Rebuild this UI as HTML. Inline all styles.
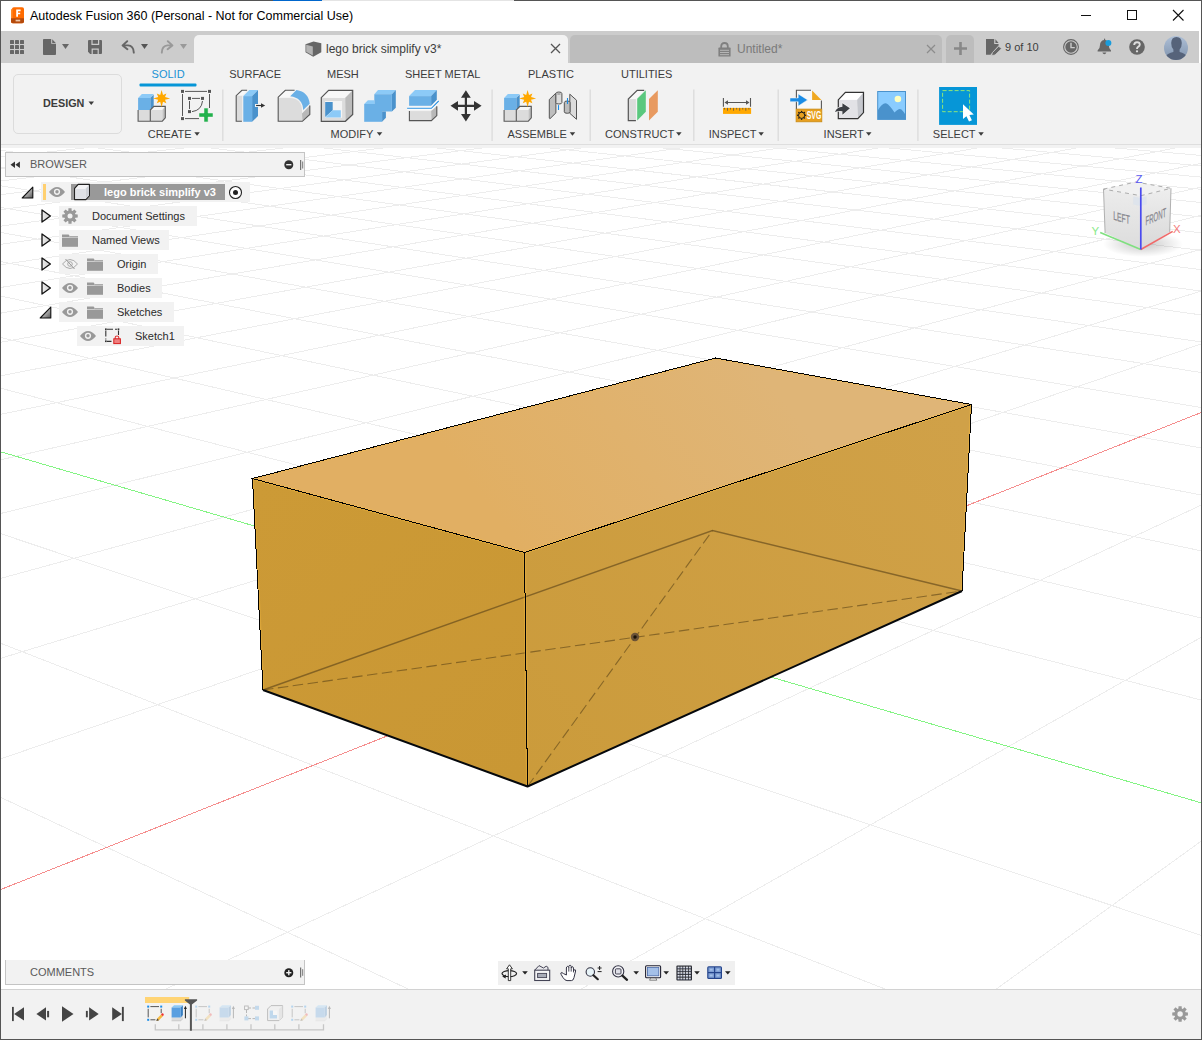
<!DOCTYPE html>
<html><head><meta charset="utf-8"><title>Autodesk Fusion 360</title>
<style>
*{box-sizing:border-box;margin:0;padding:0}
html,body{width:1202px;height:1040px;overflow:hidden;background:#fff}
body{position:relative;font-family:"Liberation Sans",sans-serif;font-size:12px;color:#3c3c3c}
.abs{position:absolute}
#frame{position:absolute;left:0;top:0;width:1202px;height:1040px;border:1px solid #555;z-index:100;pointer-events:none}
#titlebar{position:absolute;left:1px;top:1px;width:1200px;height:30px;background:#fff}
#title{position:absolute;left:29px;top:8px;font-size:12.5px;color:#000;white-space:nowrap}
#tabbar{position:absolute;left:1px;top:31px;width:1198px;height:32px;background:#ccc}
#tab1{position:absolute;left:193px;top:4px;width:374px;height:28px;background:#f2f2f2;border-radius:5px 5px 0 0}
#tab2{position:absolute;left:569px;top:4px;width:372px;height:28px;background:#bdbdbd;border-radius:5px 5px 0 0}
#tab3{position:absolute;left:945px;top:4px;width:28px;height:28px;background:#bdbdbd;border-radius:5px 5px 0 0}
.tabtxt{position:absolute;top:7px;font-size:12px;white-space:nowrap}
#toolbar{position:absolute;left:1px;top:63px;width:1200px;height:85px;background:#f2f2f2}
#tbline{position:absolute;left:0;top:81px;width:1200px;height:1px;background:#dedede}
#design{position:absolute;left:12px;top:11px;width:109px;height:60px;border:1px solid #dcdcdc;border-radius:5px}
#design span{position:absolute;left:29px;top:22px;font-weight:bold;font-size:10.8px;color:#3c3c3c}
.wtab{position:absolute;top:5px;font-size:11px;color:#3c3c3c;white-space:nowrap}
.grp{position:absolute;top:65px;font-size:11px;color:#3c3c3c;white-space:nowrap}
.sep{position:absolute;top:30px;width:1px;height:50px;background:#dcdcdc}
#viewport{position:absolute;left:1px;top:148px;width:1200px;height:841px;background:#fff;overflow:hidden}
#browserhdr{position:absolute;left:5px;top:152px;width:300px;height:25px;background:#f2f2f2;border:1px solid #c4c4c4}
#commentshdr{position:absolute;left:5px;top:960px;width:300px;height:25px;background:#f2f2f2;border:1px solid #c4c4c4;border-top:none}
.hdrtxt{position:absolute;left:24px;top:5px;font-size:11px;color:#5a5a5a}
.row{position:absolute;height:19px;background:#f2f2f2}
.rowtxt{position:absolute;font-size:11px;color:#2a2a2a;white-space:nowrap}
#navbar{position:absolute;left:498px;top:961px;width:237px;height:24px;background:#f0f0f0}
#timeline{position:absolute;left:1px;top:989px;width:1200px;height:50px;background:#f2f2f2;border-top:1px solid #d2d2d2}
</style></head>
<body>
<div id="titlebar">
  <svg class="abs" style="left:9px;top:6px" width="15" height="17" viewBox="0 0 15 17">
    <path d="M1 3.2 L2.6 0.8 Q3 0.3 3.8 0.3 H12.2 Q14 0.3 14 2 V14.5 Q14 16.3 12.2 16.3 H2.8 Q1 16.3 1 14.5 Z" fill="#ff6b00"/>
    <path d="M1 3.2 L2.6 0.8 V16.3 Q1 16.3 1 14.5 Z" fill="#ff8a2a"/>
    <path d="M1 11.2 H14 V14.5 Q14 16.3 12.2 16.3 H2.8 Q1 16.3 1 14.5 Z" fill="#b54a0c"/>
    <path d="M6.2 2.6 H10.6 V4.2 H8 V5.8 H10.2 V7.3 H8 V9.8 H6.2 Z" fill="#fff"/>
    <rect x="5.6" y="12.7" width="4.6" height="1.7" fill="#f0c8a8"/>
  </svg>
  <div id="title">Autodesk Fusion 360 (Personal - Not for Commercial Use)</div>
  <svg class="abs" style="left:1075px;top:4px" width="120" height="22" viewBox="0 0 120 22">
    <path d="M5 10.5 H15" stroke="#111" stroke-width="1" fill="none"/>
    <rect x="51.5" y="5.5" width="9" height="9" stroke="#111" stroke-width="1" fill="none"/>
    <path d="M97 5 L107.5 15.5 M107.5 5 L97 15.5" stroke="#111" stroke-width="1.1" fill="none"/>
  </svg>
</div>
<div id="tabbar">
  <!-- grid -->
  <svg class="abs" style="left:9px;top:9px" width="14" height="14" viewBox="0 0 14 14" fill="#666">
    <rect x="0" y="0" width="4" height="4" rx=".6"/><rect x="5" y="0" width="4" height="4" rx=".6"/><rect x="10" y="0" width="4" height="4" rx=".6"/>
    <rect x="0" y="5" width="4" height="4" rx=".6"/><rect x="5" y="5" width="4" height="4" rx=".6"/><rect x="10" y="5" width="4" height="4" rx=".6"/>
    <rect x="0" y="10" width="4" height="4" rx=".6"/><rect x="5" y="10" width="4" height="4" rx=".6"/><rect x="10" y="10" width="4" height="4" rx=".6"/>
  </svg>
  <!-- file -->
  <svg class="abs" style="left:42px;top:8px" width="28" height="16" viewBox="0 0 28 16">
    <path d="M0.8 0 H8.2 V4.8 H13 V15 Q13 16 12.2 16 H0.8 Q0 16 0 15 V1 Q0 0 .8 0 Z M9.2 0.3 L12.8 3.9 H9.2 Z" fill="#666"/>
    <path d="M19 5 H26 L22.5 10 Z" fill="#666"/>
  </svg>
  <!-- save -->
  <svg class="abs" style="left:87px;top:9px" width="14" height="14" viewBox="0 0 14 14">
    <path d="M1 0 H13 Q14 0 14 1 V13 Q14 14 13 14 H2.2 L0 11.8 V1 Q0 0 1 0 Z" fill="#666"/>
    <path d="M4 0 V4.4 H10.6 V0" stroke="#ccc" stroke-width="1.2" fill="none"/>
    <path d="M4.2 14 V9.2 H10.2 V14" stroke="#ccc" stroke-width="1.2" fill="none"/>
  </svg>
  <!-- undo -->
  <svg class="abs" style="left:119px;top:9px" width="30" height="14" viewBox="0 0 30 14">
    <path d="M7.2 1.2 L2.6 5.4 L7.4 9.2 M3 5.4 H8 Q13.5 5.6 13.8 12.6" stroke="#666" stroke-width="1.9" fill="none" stroke-linecap="round" stroke-linejoin="round"/>
    <path d="M21 4 H28 L24.5 9 Z" fill="#555"/>
  </svg>
  <!-- redo -->
  <svg class="abs" style="left:159px;top:9px" width="30" height="14" viewBox="0 0 30 14">
    <path d="M7.8 1.2 L12.4 5.4 L7.6 9.2 M12 5.4 H7.5 Q2 5.8 1.8 12.6" stroke="#999" stroke-width="1.9" fill="none" stroke-linecap="round" stroke-linejoin="round"/>
    <path d="M20 4 H27 L23.5 9 Z" fill="#999"/>
  </svg>
  <div id="tab1">
    <svg class="abs" style="left:111px;top:6px" width="17" height="17" viewBox="0 0 17 17">
      <path d="M0.5 3.2 L8.5 0.4 L16.3 2.2 V11.2 L8.2 15.8 L0.5 11.2 Z" fill="#666"/>
      <path d="M1.2 3.8 L7.8 5.6 V14.6 L1.2 10.8 Z" fill="#b4b4b4"/>
    </svg>
    <span class="tabtxt" style="left:132px;color:#3c3c3c">lego brick simplify v3*</span>
    <svg class="abs" style="left:356px;top:8px" width="11" height="11" viewBox="0 0 11 11"><path d="M1 1 L10 10 M10 1 L1 10" stroke="#555" stroke-width="1.3" fill="none"/></svg>
  </div>
  <div id="tab2">
    <svg class="abs" style="left:148px;top:7px" width="13" height="15" viewBox="0 0 13 15">
      <path d="M3.2 6 V4.2 Q3.2 1 6.5 1 Q9.8 1 9.8 4.2 V6" stroke="#808080" stroke-width="1.8" fill="none"/>
      <path d="M1 5.6 H12 Q12.6 5.6 12.6 6.2 V14 Q12.6 14.6 12 14.6 H1 Q0.4 14.6 .4 14 V6.2 Q.4 5.6 1 5.6 Z" fill="#808080"/>
      <path d="M2 8.3 H11 M2 10.5 H11 M2 12.7 H11" stroke="#bcbcbc" stroke-width="0.9"/>
    </svg>
    <span class="tabtxt" style="left:167px;color:#7a7a7a">Untitled*</span>
    <svg class="abs" style="left:356px;top:9px" width="10" height="10" viewBox="0 0 10 10"><path d="M1 1 L9 9 M9 1 L1 9" stroke="#8c8c8c" stroke-width="1.2" fill="none"/></svg>
  </div>
  <div id="tab3">
    <svg class="abs" style="left:8px;top:7px" width="13" height="13" viewBox="0 0 13 13"><path d="M6.5 0 V13 M0 6.5 H13" stroke="#888" stroke-width="2.6" fill="none"/></svg>
  </div>
  <!-- doc edit -->
  <svg class="abs" style="left:985px;top:8px" width="17" height="17" viewBox="0 0 17 17">
    <path d="M0 0 H8.2 V5 H12.6 V6.5 L4.5 15.8 H0 Z M9.4 0.2 L12.6 4 H9.4 Z" fill="#666"/>
    <path d="M12.6 7.2 L15.6 9.6 L9 16 L5.6 16.6 L6.4 13.6 Z" fill="#666" stroke="#ccc" stroke-width=".8"/>
  </svg>
  <span class="tabtxt" style="left:1004px;top:10px;font-size:11px;color:#3c3c3c">9 of 10</span>
  <!-- clock -->
  <svg class="abs" style="left:1061px;top:7px" width="18" height="18" viewBox="0 0 18 18">
    <circle cx="9" cy="9" r="7.4" fill="none" stroke="#666" stroke-width="1.1"/><circle cx="9" cy="9" r="5.7" fill="#666"/>
    <path d="M9 4.8 V9.6 H12.8" stroke="#ccc" stroke-width="1.4" fill="none"/>
  </svg>
  <!-- bell -->
  <svg class="abs" style="left:1095px;top:7px" width="18" height="18" viewBox="0 0 18 18">
    <path d="M8 1.2 Q8 0.6 8.6 0.6 Q9.2 .6 9.2 1.2 V2 Q12.6 2.8 12.8 7 Q12.8 11 15 12.6 V13.4 H1.6 V12.6 Q4 11 4 7 Q4.2 2.8 8 2 Z" fill="#666"/>
    <path d="M6.4 14.6 H10.4 Q9.8 16.2 8.4 16.2 Q7 16.2 6.4 14.6 Z" fill="#666"/>
    <circle cx="12.4" cy="4.9" r="3" fill="#1a9cdb"/>
  </svg>
  <!-- help -->
  <svg class="abs" style="left:1127px;top:7px" width="18" height="18" viewBox="0 0 18 18">
    <circle cx="9" cy="9" r="7.8" fill="#666"/>
    <path d="M6.2 7 Q6.2 4.2 9 4.2 Q11.8 4.2 11.8 6.6 Q11.8 8 10.2 8.8 Q9 9.5 9 11" stroke="#ddd" stroke-width="1.9" fill="none"/>
    <circle cx="9" cy="13.3" r="1.15" fill="#ddd"/>
  </svg>
  <!-- avatar -->
  <svg class="abs" style="left:1162px;top:4px" width="26" height="26" viewBox="0 0 26 26">
    <defs><linearGradient id="avg" x1="0" y1="0" x2="0" y2="1"><stop offset="0" stop-color="#aebfd6"/><stop offset="1" stop-color="#7f93ad"/></linearGradient>
    <clipPath id="avc"><circle cx="13" cy="13" r="12"/></clipPath></defs>
    <circle cx="13" cy="13" r="12" fill="url(#avg)"/>
    <g clip-path="url(#avc)" fill="#56637a">
      <path d="M13.5 2 Q18.6 2 18.8 8 Q18.8 12.5 16.6 14.6 V17 Q22 18.6 23.5 21 V26 H3 V21 Q4.5 18.6 10.4 17 V14.6 Q8.2 12.5 8.2 8 Q8.4 2 13.5 2 Z"/>
    </g>
  </svg>
</div>
<div id="toolbar">
  <div id="design"><span>DESIGN</span></div>
  <div id="tbline"></div>
<svg class="abs" style="left:0;top:0" width="1200" height="85" viewBox="1 63 1200 85"><rect x="222.10000000000002" y="89.5" width="1.4" height="51.5" fill="#dcdcdc"/><rect x="491.40000000000003" y="89.5" width="1.4" height="51.5" fill="#dcdcdc"/><rect x="589.5" y="89.5" width="1.4" height="51.5" fill="#dcdcdc"/><rect x="693.0999999999999" y="89.5" width="1.4" height="51.5" fill="#dcdcdc"/><rect x="777.5" y="89.5" width="1.4" height="51.5" fill="#dcdcdc"/><rect x="917.1999999999999" y="89.5" width="1.4" height="51.5" fill="#dcdcdc"/><rect x="139.5" y="83.6" width="57" height="2.8" rx="1" fill="#0696d7"/><g transform="translate(0,0)"><path d="M138.1 98 L141.9 94.1 H153.7 L150.3 98 Z" fill="#8ccaf7"/><path d="M150.3 98 L153.7 94.4 V106.2 L150.3 110 Z" fill="#4a92cc"/><rect x="138.1" y="98" width="12.2" height="12" fill="#6ab0e6"/><path d="M150.3 110 L153.7 106.4 H165.3 L162.3 110 Z" fill="#f6f6f6"/><path d="M162.3 110 L165.3 106.4 V117.8 L162.3 121.2 Z" fill="#c2c2c2"/><rect x="138.1" y="110" width="24.2" height="11.2" fill="#dcdcdc"/><path d="M138.1 110 V121.2 H162.3 L165.3 117.8 V106.4 H153.9 L150.3 110 V121.2" fill="none" stroke="#5a5a5a" stroke-width="1.1"/><polygon points="161.60,89.90 163.02,94.98 166.41,93.59 165.02,96.98 170.10,98.40 165.02,99.82 166.41,103.21 163.02,101.82 161.60,106.90 160.18,101.82 156.79,103.21 158.18,99.82 153.10,98.40 158.18,96.98 156.79,93.59 160.18,94.98" fill="#ffa800"/></g><g stroke="#555" stroke-width="1" fill="none"><path d="M185 91.4 H207 M182.5 94 V116 M209.5 94 V108 M185 118.6 H199"/><path d="M192 98.4 H200 M189.5 101 V109 M202.5 101 Q201.5 110.5 192 111.6"/></g><g fill="#555"><rect x="181.0" y="89.9" width="3" height="3"/><rect x="208.0" y="89.9" width="3" height="3"/><rect x="181.0" y="117.1" width="3" height="3"/><rect x="188.0" y="96.9" width="3" height="3"/><rect x="201.0" y="96.9" width="3" height="3"/><rect x="188.0" y="110.1" width="3" height="3"/></g><path d="M204 108.1 H208.1 V113 H213 V117.1 H208.1 V121.9 H204 V117.1 H199 V113 H204 Z" fill="#22b14c" stroke="#f2f2f2" stroke-width=".5"/><path d="M236.2 95.7 L241.9 90.3 H247.5 L242 95.7 Z" fill="#f8f8f8"/><rect x="236.2" y="95.7" width="6" height="25.6" fill="#dcdcdc"/><path d="M247.1 90.3 H241.9 L236.2 95.7 V121.3 H241.9" fill="none" stroke="#555" stroke-width="1.1"/><path d="M243.3 96.1 L249.3 90.1 H258 L252.1 96.1 Z" fill="#8ccaf7"/><path d="M252.1 96.1 L258 90.1 V116 L252.1 121.8 Z" fill="#4a92cc"/><rect x="243.3" y="96.1" width="8.8" height="25.7" fill="#6ab0e6"/><rect x="255" y="104" width="3.5" height="3" fill="#f2f2f2"/><path d="M256.1 105.5 H262" stroke="#333" stroke-width="1.1"/><path d="M261 103.3 L265.2 105.5 L261 107.7 Z" fill="#333"/><path d="M278.2 97.2 L285.3 90.3 H296 L289 97.2 Z" fill="#f8f8f8"/><path d="M278.6 98 H290 Q301.5 98.5 302 110 V121.3 H278.6 Z" fill="#dcdcdc"/><path d="M302 113.4 L309.8 105.4 V114.4 L302.4 121.3 Z" fill="#b8b8b8"/><path d="M290.2 96.2 L296.5 90.1 Q308.5 92 309.7 103.8 L303.2 110 Q302.6 97.6 290.2 96.2 Z" fill="#6ab0e6"/><path d="M294.6 90.3 H285.3 L278.2 97.2 V121.3 H302.4 L309.8 114.4 V105.4" fill="none" stroke="#555" stroke-width="1.1"/><path d="M321.3 97.6 L328.6 90.3 H352.7 L345.1 98 Z" fill="#f8f8f8"/><path d="M345.1 98 L352.7 90.3 V114.5 L345.4 121.3 Z" fill="#bcbcbc"/><rect x="321.3" y="98" width="23.9" height="23.3" fill="#dcdcdc"/><rect x="325.1" y="101" width="17" height="16.8" fill="#f4f4f4"/><path d="M325.2 102.1 H332.7 V110.3 L325.2 117 Z" fill="#4a92cc"/><path d="M325.2 117.4 L332.7 110.3 H340.8 V117.4 Z" fill="#8ccaf7"/><path d="M321.3 97.6 L328.6 90.3 H352.7 V114.5 L345.4 121.3 H321.3 Z" fill="none" stroke="#555" stroke-width="1.2"/><path d="M374.3 94.2 L378 90.1 H395.8 L391.9 94.2 Z" fill="#8ccaf7"/><path d="M391.9 94.2 L395.8 90.1 V107.7 L391.9 111.5 Z" fill="#4a92cc"/><rect x="374.3" y="94.2" width="17.6" height="17.3" fill="#6ab0e6"/><path d="M364.2 104 L367.9 100.2 H374.3 V104 Z" fill="#8ccaf7"/><rect x="364.2" y="104" width="17.9" height="17.8" fill="#6ab0e6"/><path d="M382.1 111.5 H385.9 V117.8 L382.1 121.8 Z" fill="#4a92cc"/><path d="M409.1 96.1 L415 90.1 H436.8 L431.1 96.1 Z" fill="#8ccaf7"/><path d="M431.1 96.1 L436.8 90.1 V99.8 L431.1 105.8 Z" fill="#4a92cc"/><rect x="409.1" y="96.1" width="22" height="9.7" fill="#6ab0e6"/><rect x="409.4" y="111.1" width="21.7" height="9.5" fill="#dcdcdc"/><path d="M431.1 111.1 L436.8 106.2 V115.6 L431.4 120.6 Z" fill="#b8b8b8"/><path d="M409.4 111.1 V120.6 H431.4 L436.8 115.6 V106.2" fill="none" stroke="#555" stroke-width="1.1"/><path d="M407.1 108.3 H431.4 L438.7 101" fill="none" stroke="#fff" stroke-width="3"/><path d="M407.1 108.3 H431.4 L438.7 101" fill="none" stroke="#2a90e0" stroke-width="1.1"/><path d="M465.9 96 V116 M456 105.8 H476" stroke="#333" stroke-width="2.2"/><path d="M465.9 90.3 L470.8 97.8 H461 Z M465.9 121.6 L470.8 114 H461 Z M450.5 105.8 L458 100.9 V110.7 Z M481.6 105.8 L474 100.9 V110.7 Z" fill="#333"/><g transform="translate(366,0)"><path d="M138.1 98 L141.9 94.1 H153.7 L150.3 98 Z" fill="#8ccaf7"/><path d="M150.3 98 L153.7 94.4 V106.2 L150.3 110 Z" fill="#4a92cc"/><rect x="138.1" y="98" width="12.2" height="12" fill="#6ab0e6"/><path d="M150.3 110 L153.7 106.4 H165.3 L162.3 110 Z" fill="#f6f6f6"/><path d="M162.3 110 L165.3 106.4 V117.8 L162.3 121.2 Z" fill="#c2c2c2"/><rect x="138.1" y="110" width="24.2" height="11.2" fill="#dcdcdc"/><path d="M138.1 110 V121.2 H162.3 L165.3 117.8 V106.4 H153.9 L150.3 110 V121.2" fill="none" stroke="#5a5a5a" stroke-width="1.1"/><polygon points="161.60,89.90 163.02,94.98 166.41,93.59 165.02,96.98 170.10,98.40 165.02,99.82 166.41,103.21 163.02,101.82 161.60,106.90 160.18,101.82 156.79,103.21 158.18,99.82 153.10,98.40 158.18,96.98 156.79,93.59 160.18,94.98" fill="#ffa800"/></g><path d="M549.3 99.5 L555.9 93.1 V112.9 L549.9 118.8 L549.3 118.2 Z" fill="#bdbdbd" stroke="#555" stroke-width="1"/><path d="M555.9 93.6 Q555.9 92 558.9 92 Q561.9 92 561.9 93.6 V102.6 Q561.9 104 558.9 104 Q555.9 104 555.9 102.6 Z" fill="#dcdcdc" stroke="#555" stroke-width="1"/><ellipse cx="558.9" cy="94" rx="2" ry=".9" fill="#aaa"/><path d="M558.5 105.1 V110" stroke="#1a8ce6" stroke-width="1.1"/><path d="M569.8 94.2 L576.5 100.2 V119.3 L569.8 113.3 Z" fill="#dcdcdc" stroke="#555" stroke-width="1"/><path d="M564.3 102.6 Q564.3 101 567.2 101 Q570.1 101 570.1 102.6 V111.8 Q570.1 113.3 567.2 113.3 Q564.3 113.3 564.3 111.8 Z" fill="#bdbdbd" stroke="#555" stroke-width="1"/><path d="M567.5 98 V104" stroke="#1a8ce6" stroke-width="1.1"/><path d="M628.3 99.1 L637.2 90.3 H644.2 L636 99.1 Z" fill="#f8f8f8"/><rect x="628.3" y="99.1" width="7.6" height="21.5" fill="#dcdcdc"/><path d="M644.2 90.3 H637.2 L628.3 99.1 V120.6 H635.9" fill="none" stroke="#555" stroke-width="1.2"/><path d="M637.2 98.7 L645.8 90.3 V111.8 L637.2 120.6 Z" fill="#5ac87e"/><path d="M649 99.1 L657.8 90.3 V111.8 L649 120.6 Z" fill="#e89a60"/><path d="M723.4 98 V106.8 M750.5 98 V106.8 M725.5 102.5 H748.5" stroke="#555" stroke-width="1.1"/><path d="M724.4 102.5 L728 100.2 V104.8 Z M749.5 102.5 L746 100.2 V104.8 Z" fill="#555"/><rect x="723" y="107.9" width="28.1" height="6" fill="#ffa800"/><rect x="724.10" y="107.9" width=".8" height="1.6" fill="#555"/><rect x="727.15" y="107.9" width=".8" height="2.8" fill="#555"/><rect x="730.20" y="107.9" width=".8" height="1.6" fill="#555"/><rect x="733.25" y="107.9" width=".8" height="2.8" fill="#555"/><rect x="736.30" y="107.9" width=".8" height="1.6" fill="#555"/><rect x="739.35" y="107.9" width=".8" height="2.8" fill="#555"/><rect x="742.40" y="107.9" width=".8" height="1.6" fill="#555"/><rect x="745.45" y="107.9" width=".8" height="2.8" fill="#555"/><rect x="748.50" y="107.9" width=".8" height="1.6" fill="#555"/><path d="M796.4 90.3 H812 V100 H821.4 V110 H796.4 Z" fill="#f8f8f8"/><path d="M811 90.3 H796.4 V109 M821.4 100.5 V109" fill="none" stroke="#555" stroke-width="1.1"/><path d="M812.1 90.5 L821.4 99.9 H812.1 Z" fill="#f0a820"/><rect x="796.1" y="109.1" width="25.7" height="12.7" fill="#e8a020" stroke="#c88a14" stroke-width=".8"/><circle cx="801.6" cy="115.3" r="3.1" fill="none" stroke="#1a1a1a" stroke-width="1"/><circle cx="805.50" cy="115.30" r=".75" fill="#1a1a1a"/><circle cx="804.36" cy="118.06" r=".75" fill="#1a1a1a"/><circle cx="801.60" cy="119.20" r=".75" fill="#1a1a1a"/><circle cx="798.84" cy="118.06" r=".75" fill="#1a1a1a"/><circle cx="797.70" cy="115.30" r=".75" fill="#1a1a1a"/><circle cx="798.84" cy="112.54" r=".75" fill="#1a1a1a"/><circle cx="801.60" cy="111.40" r=".75" fill="#1a1a1a"/><circle cx="804.36" cy="112.54" r=".75" fill="#1a1a1a"/><text transform="translate(806.8,119.2) scale(0.6,1)" font-family="Liberation Sans, sans-serif" font-weight="bold" font-size="11.4" fill="#fff">SVG</text><path d="M790 98 H798.2 V93.9 L807.6 99.9 L798.2 106.1 V101.7 H790 Z" fill="#1a8ce6" stroke="#f2f2f2" stroke-width=".5"/><path d="M838.3 99.9 L845.4 92.4 H863.5 L857 99.9 Z" fill="#fff"/><path d="M857 99.9 L863.5 92.4 V112.6 L857.8 118.6 Z" fill="#c6c8ce"/><rect x="838.3" y="99.9" width="18.9" height="18.7" fill="#e2e2e6"/><path d="M838.3 99.9 L845.4 92.4 H863.5 V112.6 L857.8 118.6 H838.3 Z" fill="none" stroke="#333" stroke-width="1.2"/><path d="M842.4 103.2 L849.9 108.3 L842.4 114.8 V111.2 Q838 110.6 834.9 112 Q837 107.2 842.4 106.8 Z" fill="#3c3f44" stroke="#f4f4f4" stroke-width="1.2" paint-order="stroke"/><rect x="877.7" y="91.5" width="27.8" height="27.9" fill="#8accff" stroke="#4a92cc" stroke-width="1"/><path d="M878 110 Q883 102 886.5 103.6 Q889.5 105 894.5 112.6 Q899 107.6 901.4 109.6 Q903.5 111.6 905 114 V119 H878 Z" fill="#4a92cc"/><circle cx="897.9" cy="99" r="3.3" fill="#ffffc0"/><rect x="939.1" y="87" width="37.9" height="37.9" fill="#0696d7"/><rect x="942.6" y="90.6" width="27" height="21.1" fill="none" stroke="#8ee67a" stroke-width="1" stroke-dasharray="4 2"/><path d="M963 104.2 V118.9 L966.4 116.2 L969 121.6 L971.9 120.3 L969.4 115 L973.8 114.5 Z" fill="#fff"/><path d="M88.5 101.5 H94 L91.25 105 Z" fill="#3c3c3c"/><path d="M194.3 132.2 H199.8 L197.05 135.7 Z" fill="#3c3c3c"/><path d="M376.8 132.2 H382.3 L379.55 135.7 Z" fill="#3c3c3c"/><path d="M569.7 132.2 H575.2 L572.45 135.7 Z" fill="#3c3c3c"/><path d="M676.1 132.2 H681.6 L678.85 135.7 Z" fill="#3c3c3c"/><path d="M758.4 132.2 H763.9 L761.15 135.7 Z" fill="#3c3c3c"/><path d="M866 132.2 H871.5 L868.75 135.7 Z" fill="#3c3c3c"/><path d="M978.3 132.2 H983.8 L981.05 135.7 Z" fill="#3c3c3c"/></svg>
<span class="wtab" style="left:150.6px;color:#1b93d4">SOLID</span><span class="wtab" style="left:228.2px;color:#3c3c3c">SURFACE</span><span class="wtab" style="left:326px;color:#3c3c3c">MESH</span><span class="wtab" style="left:404px;color:#3c3c3c">SHEET METAL</span><span class="wtab" style="left:527px;color:#3c3c3c">PLASTIC</span><span class="wtab" style="left:620px;color:#3c3c3c">UTILITIES</span><span class="grp" style="left:146.7px">CREATE</span><span class="grp" style="left:329.6px">MODIFY</span><span class="grp" style="left:506.5px">ASSEMBLE</span><span class="grp" style="left:604.1px">CONSTRUCT</span><span class="grp" style="left:707.7px">INSPECT</span><span class="grp" style="left:822.6px">INSERT</span><span class="grp" style="left:931.8px">SELECT</span>
</div>
<div id="viewport">
<svg class="abs" style="left:0;top:0" width="1200" height="841" viewBox="1 148 1200 841">
<path d="M408.1 989.0L1.0 797.5M996.3 989.0L1201.0 841.3M885.0 989.0L1.0 643.4M581.2 989.0L1201.0 637.4M1201.0 935.3L1.0 533.8M165.9 989.0L1201.0 505.2M1201.0 700.0L1.0 388.3M1.0 758.8L1201.0 344.0M1201.0 617.9L1.0 337.6M1.0 658.2L1201.0 291.2M1201.0 550.8L1.0 296.1M1.0 578.3L1201.0 249.4M1201.0 495.0L1.0 261.6M1.0 513.4L1201.0 215.3M1201.0 447.9L1.0 232.5M1.0 459.7L1201.0 187.1M1201.0 407.5L1.0 207.5M1.0 414.3L1201.0 163.3M1201.0 372.5L1.0 185.9M1.0 375.7L1175.4 148.0M1201.0 341.9L1.0 167.0M1.0 342.2L1076.4 148.0M1201.0 314.9L1.0 150.3M1.0 313.1L977.4 148.0M1201.0 291.0L97.6 148.0M1.0 287.4L878.4 148.0M1201.0 269.6L210.9 148.0M1.0 264.7L779.3 148.0M1201.0 250.3L324.1 148.0M1.0 244.3L680.2 148.0M1201.0 232.8L437.2 148.0M1.0 226.1L581.0 148.0M1201.0 217.0L550.3 148.0M1.0 209.6L481.8 148.0M1201.0 202.5L663.4 148.0M1.0 194.6L382.6 148.0M1201.0 189.3L776.4 148.0M1.0 180.9L283.3 148.0M1201.0 177.1L889.3 148.0M1.0 168.4L183.9 148.0M1201.0 165.9L1002.2 148.0M1.0 157.0L84.6 148.0M1201.0 155.4L1115.0 148.0" stroke="#ededed" stroke-width="1" fill="none" shape-rendering="crispEdges"/>
<path d="M1.0 889.4L1201.0 412.6" stroke="#f58e8e" stroke-width="1" fill="none" shape-rendering="crispEdges"/>
<path d="M1201.0 802.8L1.0 451.9" stroke="#84f484" stroke-width="1" fill="none" shape-rendering="crispEdges"/>
<defs><linearGradient id="gtop" gradientUnits="userSpaceOnUse" x1="524" y1="552" x2="760" y2="370"><stop offset="0" stop-color="#e1af63"/><stop offset="1" stop-color="#dfb577"/></linearGradient><linearGradient id="gleft" gradientUnits="userSpaceOnUse" x1="260" y1="480" x2="520" y2="780"><stop offset="0" stop-color="#cc9a36"/><stop offset="1" stop-color="#c99734"/></linearGradient><linearGradient id="gright" gradientUnits="userSpaceOnUse" x1="530" y1="780" x2="960" y2="420"><stop offset="0" stop-color="#cb9b3b"/><stop offset="1" stop-color="#d0a148"/></linearGradient></defs>
<polygon points="252.5,478.5 524.5,552.5 971.5,404.5 715.5,358" fill="url(#gtop)"/>
<polygon points="252.5,478.5 524.5,552.5 527.5,786.5 263,690" fill="url(#gleft)"/>
<polygon points="524.5,552.5 971.5,404.5 962,591 527.5,786.5" fill="url(#gright)"/>
<path d="M263 690L712.5 530.5L962 591" stroke="#5a4218" stroke-opacity=".62" stroke-width="1.4" fill="none"/>
<path d="M263 690L962 591M527.5 786.5L712.5 530.5" stroke="#5a4218" stroke-opacity=".6" stroke-width="1.1" stroke-dasharray="10.5 4.5" fill="none"/>
<circle cx="635" cy="637" r="4.2" fill="#5b4636" fill-opacity=".85"/><circle cx="635" cy="637" r="1.7" fill="#1a1208"/>
<clipPath id="boxclip"><polygon points="252.5,478.5 715.5,358 971.5,404.5 962,591 527.5,786.5 263,690"/></clipPath><path clip-path="url(#boxclip)" d="M252.5 478.5L715.5 358L971.5 404.5L524.5 552.5Z M524.5 552.5L527.5 786.5 M252.5 478.5L263 690 M971.5 404.5L962 591" stroke="#ffc040" stroke-opacity=".32" stroke-width="3" fill="none"/>
<path d="M252.5 478.5L715.5 358L971.5 404.5L524.5 552.5Z M524.5 552.5L527.5 786.5 M252.5 478.5L263 690 M971.5 404.5L962 591" stroke="#000" stroke-width="1" fill="none" shape-rendering="crispEdges"/>
<path d="M263 690L527.5 786.5L962 591" stroke="#05080c" stroke-width="2" fill="none" stroke-linejoin="round"/>
<defs><radialGradient id="vcsh"><stop offset="0" stop-color="#000" stop-opacity=".22"/><stop offset="1" stop-color="#000" stop-opacity="0"/></radialGradient>
<linearGradient id="vcl" x1="0" y1="0" x2="0" y2="1"><stop offset="0" stop-color="#ececec"/><stop offset="1" stop-color="#dcdcdc"/></linearGradient>
<linearGradient id="vcr" x1="0" y1="0" x2="0" y2="1"><stop offset="0" stop-color="#eeeeee"/><stop offset="1" stop-color="#d8d8d8"/></linearGradient></defs>
<ellipse cx="1143" cy="244" rx="40" ry="13" fill="url(#vcsh)"/>
<polygon points="1103.5,189.1 1135.9,182 1171,188.3 1140.8,195.7" fill="#f1f1f1"/>
<polygon points="1103.5,189.1 1140.8,195.7 1140.8,249.5 1105.1,233" fill="url(#vcl)"/>
<polygon points="1140.8,195.7 1171,188.3 1169.7,231.9 1140.8,249.5" fill="url(#vcr)"/>
<path id="vchover" d="M1133.3 196.6 L1140.8 197.9 L1146.6 196.4 V204.2 L1140.8 205.9 L1133.3 204.4 Z" fill="#dbe2ec" fill-opacity=".8"/><path d="M1103.5 189.1L1135.9 182L1171 188.3L1140.8 195.7Z" fill="none" stroke="#a4a4a4" stroke-width=".9" stroke-dasharray="4 4"/>
<path d="M1103.5 189.1L1105.1 233M1171 188.3L1169.7 231.9" fill="none" stroke="#a8a8a8" stroke-width=".9"/>
<path d="M1140.8 249.5L1100.2 232.5" stroke="#7fe07f" stroke-width="1.6"/>
<path d="M1140.8 249.5L1172.7 231.4" stroke="#f06a6a" stroke-width="1.6"/>
<path d="M1140.8 187.5V249.5" stroke="#4a4af0" stroke-width="1.7"/>
<text transform="matrix(1,0.28,0,1,1113.2,219.6)" font-family="Liberation Sans, sans-serif" font-size="12" fill="#85858c" stroke="#85858c" stroke-width=".25" textLength="16.6" lengthAdjust="spacingAndGlyphs">LEFT</text>
<text transform="matrix(1,-0.45,0,1,1145.6,225.6)" font-family="Liberation Sans, sans-serif" font-size="12.5" fill="#85858c" stroke="#85858c" stroke-width=".25" textLength="20.5" lengthAdjust="spacingAndGlyphs">FRONT</text>
<text x="1135.6" y="183.4" font-family="Liberation Sans, sans-serif" font-size="11.5" fill="#5a5af2">Z</text>
<text x="1091.6" y="235.2" font-family="Liberation Sans, sans-serif" font-size="11.5" fill="#8aea8a">Y</text>
<text x="1173" y="233" font-family="Liberation Sans, sans-serif" font-size="11.5" fill="#f47a7a">X</text>
<!--VIEWCUBE_END-->
</svg>
</div>
<div id="browserhdr"><span class="hdrtxt">BROWSER</span><svg class="abs" style="left:4px;top:8px" width="12" height="8" viewBox="0 0 12 8"><path d="M0.5 3.8 L5 0.6 V7 Z M5.4 3.8 L9.9 0.6 V7 Z" fill="#333"/></svg><svg class="abs" style="left:277px;top:6px" width="22" height="12" viewBox="0 0 22 12"><circle cx="5.8" cy="5.7" r="4.5" fill="#333"/><rect x="3.2" y="5" width="5.2" height="1.4" fill="#f2f2f2"/><path d="M17.7 1 V11" stroke="#555" stroke-width="1"/><path d="M19.7 2.5 V9.5" stroke="#777" stroke-width="1"/></svg></div>
<div id="tree"><div class="row" style="left:41px;top:182px;width:209px;height:20px"></div><svg class="abs" style="left:21px;top:186px" width="13" height="13" viewBox="0 0 13 13"><defs><linearGradient id="tg2" x1="0" y1="0" x2="1" y2="1"><stop offset="0.3" stop-color="#d8d8d8"/><stop offset="1" stop-color="#555"/></linearGradient></defs><path d="M1.2 12 L11.8 1.2 V12 Z" fill="url(#tg2)" stroke="#111" stroke-width="1.1" stroke-linejoin="round"/></svg><div class="abs" style="left:43px;top:184px;width:3px;height:16px;background:#ffd070"></div><svg class="abs" style="left:49px;top:187px" width="16" height="10" viewBox="0 0 16 10"><path d="M0 5 Q4 0 8 0 Q12 0 16 5 Q12 10 8 10 Q4 10 0 5 Z" fill="#999"/><circle cx="8" cy="4.8" r="3.1" fill="#f2f2f2"/><circle cx="8" cy="4.8" r="1.7" fill="#999"/></svg><div class="abs" style="left:71px;top:184px;width:154px;height:16px;background:#999"></div><svg class="abs" style="left:73px;top:183px" width="18" height="18" viewBox="0 0 18 18"><path d="M1.6 5.4 L5.2 1.4 H16.4 V12.6 L12.8 16.6 H1.6 Z" fill="#f4f4f6" stroke="#222" stroke-width="1.2" stroke-linejoin="round"/><rect x="2.4" y="6" width="10" height="10" fill="#dfe1e6"/><path d="M12.6 5.8 L16 2 V12.4 L12.6 16 Z" fill="#cfd2d8"/></svg><span class="rowtxt" style="left:104px;top:186px;font-weight:bold;color:#fff;font-size:11px">lego brick simplify v3</span><svg class="abs" style="left:228px;top:185px" width="15" height="15" viewBox="0 0 15 15"><circle cx="7.5" cy="7.5" r="6" fill="#fff" stroke="#222" stroke-width="1.1"/><circle cx="7.5" cy="7.5" r="2.5" fill="#222"/></svg><div class="row" style="left:59px;top:206px;width:138px;height:20px"></div><svg class="abs" style="left:40.5px;top:209px" width="11" height="14" viewBox="0 0 11 14"><defs><linearGradient id="tg" x1="0" x2="1"><stop offset="0" stop-color="#eee"/><stop offset="1" stop-color="#ccc"/></linearGradient></defs><path d="M1 1 L9.4 7 L1 13 Z" fill="url(#tg)" stroke="#111" stroke-width="1.3" stroke-linejoin="round"/></svg><svg class="abs" style="left:62px;top:208px" width="16" height="16" viewBox="0 0 16 16"><polygon points="15.74,6.43 15.74,9.57 13.35,9.65 12.95,10.61 14.58,12.36 12.36,14.58 10.61,12.95 9.65,13.35 9.57,15.74 6.43,15.74 6.35,13.35 5.39,12.95 3.64,14.58 1.42,12.36 3.05,10.61 2.65,9.65 0.26,9.57 0.26,6.43 2.65,6.35 3.05,5.39 1.42,3.64 3.64,1.42 5.39,3.05 6.35,2.65 6.43,0.26 9.57,0.26 9.65,2.65 10.61,3.05 12.36,1.42 14.58,3.64 12.95,5.39 13.35,6.35" fill="#999"/><circle cx="8" cy="8" r="2.5" fill="#f2f2f2"/></svg><span class="rowtxt" style="left:92px;top:210px">Document Settings</span><div class="row" style="left:59px;top:230px;width:110px;height:20px"></div><svg class="abs" style="left:40.5px;top:233px" width="11" height="14" viewBox="0 0 11 14"><defs><linearGradient id="tg" x1="0" x2="1"><stop offset="0" stop-color="#eee"/><stop offset="1" stop-color="#ccc"/></linearGradient></defs><path d="M1 1 L9.4 7 L1 13 Z" fill="url(#tg)" stroke="#111" stroke-width="1.3" stroke-linejoin="round"/></svg><svg class="abs" style="left:62px;top:234px" width="16" height="13" viewBox="0 0 16 13"><path d="M0 0.6 H6.6 L7.6 2 H7.6 V2.9 H0 Z" fill="#999"/><rect x="0" y="3.6" width="16" height="9.2" fill="#999"/><rect x="7.6" y="2.2" width="8.4" height="1" fill="#999"/></svg><span class="rowtxt" style="left:92px;top:234px">Named Views</span><div class="row" style="left:59px;top:254px;width:99px;height:20px"></div><svg class="abs" style="left:40.5px;top:257px" width="11" height="14" viewBox="0 0 11 14"><defs><linearGradient id="tg" x1="0" x2="1"><stop offset="0" stop-color="#eee"/><stop offset="1" stop-color="#ccc"/></linearGradient></defs><path d="M1 1 L9.4 7 L1 13 Z" fill="url(#tg)" stroke="#111" stroke-width="1.3" stroke-linejoin="round"/></svg><svg class="abs" style="left:62px;top:258px" width="16" height="12" viewBox="0 0 16 12"><path d="M0.5 6 Q4 1.5 8 1.5 Q12 1.5 15.5 6 Q12 10.5 8 10.5 Q4 10.5 .5 6 Z" fill="none" stroke="#aaa" stroke-width="1"/><circle cx="8" cy="6" r="2.3" fill="none" stroke="#aaa" stroke-width="1"/><path d="M3.5 1 L12.5 11" stroke="#999" stroke-width="1"/></svg><svg class="abs" style="left:87px;top:258px" width="16" height="13" viewBox="0 0 16 13"><path d="M0 0.6 H6.6 L7.6 2 H7.6 V2.9 H0 Z" fill="#999"/><rect x="0" y="3.6" width="16" height="9.2" fill="#999"/><rect x="7.6" y="2.2" width="8.4" height="1" fill="#999"/></svg><span class="rowtxt" style="left:117px;top:258px">Origin</span><div class="row" style="left:59px;top:278px;width:103px;height:20px"></div><svg class="abs" style="left:40.5px;top:281px" width="11" height="14" viewBox="0 0 11 14"><defs><linearGradient id="tg" x1="0" x2="1"><stop offset="0" stop-color="#eee"/><stop offset="1" stop-color="#ccc"/></linearGradient></defs><path d="M1 1 L9.4 7 L1 13 Z" fill="url(#tg)" stroke="#111" stroke-width="1.3" stroke-linejoin="round"/></svg><svg class="abs" style="left:62px;top:283px" width="16" height="10" viewBox="0 0 16 10"><path d="M0 5 Q4 0 8 0 Q12 0 16 5 Q12 10 8 10 Q4 10 0 5 Z" fill="#999"/><circle cx="8" cy="4.8" r="3.1" fill="#f2f2f2"/><circle cx="8" cy="4.8" r="1.7" fill="#999"/></svg><svg class="abs" style="left:87px;top:282px" width="16" height="13" viewBox="0 0 16 13"><path d="M0 0.6 H6.6 L7.6 2 H7.6 V2.9 H0 Z" fill="#999"/><rect x="0" y="3.6" width="16" height="9.2" fill="#999"/><rect x="7.6" y="2.2" width="8.4" height="1" fill="#999"/></svg><span class="rowtxt" style="left:117px;top:282px">Bodies</span><div class="row" style="left:59px;top:302px;width:115px;height:20px"></div><svg class="abs" style="left:39px;top:306px" width="13" height="13" viewBox="0 0 13 13"><defs><linearGradient id="tg2" x1="0" y1="0" x2="1" y2="1"><stop offset="0.3" stop-color="#d8d8d8"/><stop offset="1" stop-color="#555"/></linearGradient></defs><path d="M1.2 12 L11.8 1.2 V12 Z" fill="url(#tg2)" stroke="#111" stroke-width="1.1" stroke-linejoin="round"/></svg><svg class="abs" style="left:62px;top:307px" width="16" height="10" viewBox="0 0 16 10"><path d="M0 5 Q4 0 8 0 Q12 0 16 5 Q12 10 8 10 Q4 10 0 5 Z" fill="#999"/><circle cx="8" cy="4.8" r="3.1" fill="#f2f2f2"/><circle cx="8" cy="4.8" r="1.7" fill="#999"/></svg><svg class="abs" style="left:87px;top:306px" width="16" height="13" viewBox="0 0 16 13"><path d="M0 0.6 H6.6 L7.6 2 H7.6 V2.9 H0 Z" fill="#999"/><rect x="0" y="3.6" width="16" height="9.2" fill="#999"/><rect x="7.6" y="2.2" width="8.4" height="1" fill="#999"/></svg><span class="rowtxt" style="left:117px;top:306px">Sketches</span><div class="row" style="left:77px;top:326px;width:107px;height:20px"></div><svg class="abs" style="left:80px;top:331px" width="16" height="10" viewBox="0 0 16 10"><path d="M0 5 Q4 0 8 0 Q12 0 16 5 Q12 10 8 10 Q4 10 0 5 Z" fill="#999"/><circle cx="8" cy="4.8" r="3.1" fill="#f2f2f2"/><circle cx="8" cy="4.8" r="1.7" fill="#999"/></svg><svg class="abs" style="left:104px;top:327px" width="18" height="18" viewBox="0 0 18 18"><path d="M3 2.2 H13 M1.8 3.6 V12.4 M3 14.4 H7.5 M14.5 3.6 V8" stroke="#333" stroke-width="1.1" fill="none" stroke-dasharray="6 2"/><g fill="#333"><rect x="1" y="1.4" width="1.7" height="1.7"/><rect x="13.6" y="1.4" width="1.7" height="1.7"/><rect x="1" y="13.4" width="1.7" height="1.7"/></g><path d="M11.2 12 V10.6 Q11.2 9 13 9 Q14.8 9 14.8 10.6 V12" stroke="#e03030" stroke-width="1.1" fill="none"/><rect x="9.8" y="11.8" width="6.6" height="4.8" fill="#f08080" stroke="#d82020" stroke-width="1"/></svg><span class="rowtxt" style="left:135px;top:330px">Sketch1</span></div>
<div id="commentshdr"><span class="hdrtxt" style="top:6px">COMMENTS</span><svg class="abs" style="left:277px;top:7px" width="22" height="12" viewBox="0 0 22 12"><circle cx="5.8" cy="5.7" r="4.5" fill="#222"/><rect x="3.2" y="5" width="5.2" height="1.4" fill="#f2f2f2"/><rect x="5.1" y="3.1" width="1.4" height="5.2" fill="#f2f2f2"/><path d="M17.7 0.5 V10.5" stroke="#555" stroke-width="1"/><path d="M19.7 2.2 V8.8" stroke="#777" stroke-width="1"/></svg></div>
<div id="navbar"><svg class="abs" style="left:0;top:0" width="237" height="24" viewBox="498 961 237 24"><ellipse cx="509.3" cy="973.6" rx="7.3" ry="3" fill="none" stroke="#222" stroke-width="1.2"/><path d="M508.3 980.6 V968.8 H506.6 L509.5 964.8 L512.4 968.8 H510.7 V980.6 Z" fill="#fff" stroke="#222" stroke-width=".9"/><path d="M502.2 976.6 L506 974.4 L505.6 978.4 Z" fill="#222"/><path d="M522.2 971.2 H527.8000000000001 L525.0 974.6 Z" fill="#222"/><path d="M534.7 970.2 L539 965.6 L543.5 968 L546.2 966.2 L548 967.4 V970.2" fill="#e8e8ec" stroke="#445" stroke-width="1"/><rect x="534.7" y="970.2" width="15" height="10.3" fill="#f4f4f6" stroke="#445" stroke-width="1.1"/><rect x="537.6" y="973.4" width="9" height="4.2" fill="#a8acb8" stroke="#445" stroke-width=".9"/><path d="M563.5 973.6 Q561.5 971.8 560.8 973 Q560.6 974 563 977.6 Q565 980.6 567 980.6 H571.4 Q573.4 980.6 574 977.6 L575.6 971 Q575.8 969.6 574.8 969.6 Q574 969.6 573.6 971 L573.4 968 Q573.2 966.6 572.2 966.6 Q571.4 966.8 571.2 968 V966.6 Q571 965.2 570 965.2 Q569 965.4 568.8 966.6 V967.6 Q568.4 966.2 567.4 966.4 Q566.4 966.8 566.4 968 V975 Z" fill="#fff" stroke="#334" stroke-width="1"/><path d="M568.8 967.6 V971.6 M571.2 968 V971.6 M573.5 970.6 V972.4" stroke="#334" stroke-width=".9" fill="none"/><circle cx="590.3" cy="972" r="4.2" fill="#e8f4f8" stroke="#334" stroke-width="1.1"/><path d="M593.4 975.2 L597.8 979.2" stroke="#222" stroke-width="2.2" stroke-linecap="round"/><path d="M597.6 968 H601.6 M599.6 966 V970 M597.6 971.6 H601.6" stroke="#222" stroke-width="1"/><circle cx="618.2" cy="971.4" r="5.6" fill="#f4f4f8" stroke="#334" stroke-width="1.1"/><rect x="615.4" y="968.8" width="5.6" height="5.2" rx="1" fill="#e0e0e8" stroke="#334" stroke-width=".9"/><path d="M622.4 975.6 L627 979.8" stroke="#222" stroke-width="2.3" stroke-linecap="round"/><path d="M633.4 971.2 H639.0 L636.1999999999999 974.6 Z" fill="#222"/><rect x="645.6" y="965.8" width="15" height="12" rx="1" fill="#f4f4f4" stroke="#223" stroke-width="1.1"/><rect x="647.4" y="967.6" width="11.4" height="8.2" fill="#a4c0e8" stroke="#4a6aa8" stroke-width=".8"/><path d="M650.6 978 H655.8 L656.8 980.2 H649.6 Z" fill="#f0f0f0" stroke="#555" stroke-width=".7"/><path d="M663.4 971.2 H669.0 L666.1999999999999 974.6 Z" fill="#222"/><defs><linearGradient id="gdg" x1="0" y1="0" x2="0" y2="1"><stop offset="0" stop-color="#fff"/><stop offset="1" stop-color="#9098b0"/></linearGradient></defs><rect x="676.4" y="965.6" width="15.6" height="15" rx="1" fill="#2a2c34"/><rect x="677.6" y="966.70" width="2" height="1.9" fill="url(#gdg)"/><rect x="677.6" y="969.45" width="2" height="1.9" fill="url(#gdg)"/><rect x="677.6" y="972.20" width="2" height="1.9" fill="url(#gdg)"/><rect x="677.6" y="974.95" width="2" height="1.9" fill="url(#gdg)"/><rect x="677.6" y="977.70" width="2" height="1.9" fill="url(#gdg)"/><rect x="680.4" y="966.70" width="2" height="1.9" fill="url(#gdg)"/><rect x="680.4" y="969.45" width="2" height="1.9" fill="url(#gdg)"/><rect x="680.4" y="972.20" width="2" height="1.9" fill="url(#gdg)"/><rect x="680.4" y="974.95" width="2" height="1.9" fill="url(#gdg)"/><rect x="680.4" y="977.70" width="2" height="1.9" fill="url(#gdg)"/><rect x="683.2" y="966.70" width="2" height="1.9" fill="url(#gdg)"/><rect x="683.2" y="969.45" width="2" height="1.9" fill="url(#gdg)"/><rect x="683.2" y="972.20" width="2" height="1.9" fill="url(#gdg)"/><rect x="683.2" y="974.95" width="2" height="1.9" fill="url(#gdg)"/><rect x="683.2" y="977.70" width="2" height="1.9" fill="url(#gdg)"/><rect x="686.0" y="966.70" width="2" height="1.9" fill="url(#gdg)"/><rect x="686.0" y="969.45" width="2" height="1.9" fill="url(#gdg)"/><rect x="686.0" y="972.20" width="2" height="1.9" fill="url(#gdg)"/><rect x="686.0" y="974.95" width="2" height="1.9" fill="url(#gdg)"/><rect x="686.0" y="977.70" width="2" height="1.9" fill="url(#gdg)"/><rect x="688.8" y="966.70" width="2" height="1.9" fill="url(#gdg)"/><rect x="688.8" y="969.45" width="2" height="1.9" fill="url(#gdg)"/><rect x="688.8" y="972.20" width="2" height="1.9" fill="url(#gdg)"/><rect x="688.8" y="974.95" width="2" height="1.9" fill="url(#gdg)"/><rect x="688.8" y="977.70" width="2" height="1.9" fill="url(#gdg)"/><path d="M694.2 971.2 H699.8000000000001 L697.0 974.6 Z" fill="#222"/><rect x="707.2" y="966.2" width="14.8" height="12.8" rx="1.5" fill="#24448c"/><rect x="708.4" y="967.4" width="5.6" height="4.6" fill="#7e9ed4"/><rect x="709.8" y="968.8" width="2.8" height="1.8" fill="#a4c0e8"/><rect x="715.2" y="967.4" width="5.6" height="4.6" fill="#7e9ed4"/><rect x="716.6" y="968.8" width="2.8" height="1.8" fill="#a4c0e8"/><rect x="708.4" y="973.2" width="5.6" height="4.6" fill="#7e9ed4"/><rect x="709.8" y="974.6" width="2.8" height="1.8" fill="#a4c0e8"/><rect x="715.2" y="973.2" width="5.6" height="4.6" fill="#7e9ed4"/><rect x="716.6" y="974.6" width="2.8" height="1.8" fill="#a4c0e8"/><path d="M725 971.2 H730.6 L727.8 974.6 Z" fill="#222"/></svg></div>
<div id="timeline"><svg class="abs" style="left:0;top:0" width="1200" height="50" viewBox="1 990 1200 50"><g fill="#444"><rect x="12" y="1006.9" width="1.8" height="14.2"/><path d="M24 1007.3 L14.1 1014 L24 1020.6 Z"/><path d="M46 1007.3 L36.4 1014 L46 1020.6 Z"/><rect x="47.1" y="1010.9" width="2" height="6.4"/><path d="M62 1006.2 L73.5 1014 L62 1021.8 Z"/><rect x="85.9" y="1010.9" width="1.9" height="6.4"/><path d="M89.1 1007.3 L98.7 1014 L89.1 1020.6 Z"/><path d="M112.2 1007.3 L121.9 1014 L112.2 1020.6 Z"/><rect x="121.9" y="1006.9" width="1.9" height="14.2"/></g><path d="M155.3 1024.2 V1029.9 H323.5 V1024.2 M178.8 1024.2 V1029.9 M202.9 1024.2 V1029.9 M226.9 1024.2 V1029.9 M251 1024.2 V1029.9 M274.8 1024.2 V1029.9 M298.9 1024.2 V1029.9" stroke="#c6c6c6" stroke-width="1.3" fill="none"/><rect x="145" y="997" width="44.2" height="6" fill="#ffd474"/><g transform="translate(147,1005)" opacity="1.0"><path d="M3.4 1.6 H12 M1.2 3.8 V12.4 M14.2 3.8 V8.2 M3.4 14.8 H8.4" stroke="#444" stroke-width=".9" fill="none"/><g fill="#1a8ce6"><rect x="0.2" y=".6" width="2" height="2"/><rect x="13.2" y=".6" width="2" height="2"/><rect x="0.2" y="13.8" width="2" height="2"/></g><path d="M9.4 15.9 L10.2 13.4 L14 9.4 L15.9 11.2 L12 15.2 Z" fill="#f5b942"/><path d="M14 9.4 L14.8 8.6 Q15.8 8 16.5 8.8 Q17.1 9.8 16.4 10.6 L15.9 11.2 Z" fill="#f03030"/><path d="M9.4 15.9 L10.2 13.4 L12 15.2 Z" fill="#444"/></g><g transform="translate(171,1005)" opacity="1.0"><path d="M0.6 12.5 H9.8 L11.9 10 V13.6 L9.8 15.8 H0.6 Z" fill="#dcdcdc"/><path d="M0.6 15.8 H9.8 L11.9 13.6" stroke="#b8b8b8" stroke-width=".6" fill="none"/><path d="M0.6 2.5 L3.1 0.3 H11.9 L9.8 2.5 Z" fill="#8ccaf7"/><path d="M9.8 2.5 L11.9 .3 V10 L9.8 12.5 Z" fill="#3a7fc0"/><rect x=".6" y="2.5" width="9.2" height="10" fill="#5a9fe0"/><path d="M14.4 13.3 V3.4" stroke="#222" stroke-width="1"/><path d="M14.4 0.8 L15.9 4 H12.9 Z" fill="#222"/></g><g transform="translate(195,1005)" opacity="0.28"><path d="M3.4 1.6 H12 M1.2 3.8 V12.4 M14.2 3.8 V8.2 M3.4 14.8 H8.4" stroke="#444" stroke-width=".9" fill="none"/><g fill="#1a8ce6"><rect x="0.2" y=".6" width="2" height="2"/><rect x="13.2" y=".6" width="2" height="2"/><rect x="0.2" y="13.8" width="2" height="2"/></g><path d="M9.4 15.9 L10.2 13.4 L14 9.4 L15.9 11.2 L12 15.2 Z" fill="#f5b942"/><path d="M14 9.4 L14.8 8.6 Q15.8 8 16.5 8.8 Q17.1 9.8 16.4 10.6 L15.9 11.2 Z" fill="#f03030"/><path d="M9.4 15.9 L10.2 13.4 L12 15.2 Z" fill="#444"/></g><g transform="translate(219,1005)" opacity="0.28"><path d="M0.6 12.5 H9.8 L11.9 10 V13.6 L9.8 15.8 H0.6 Z" fill="#dcdcdc"/><path d="M0.6 15.8 H9.8 L11.9 13.6" stroke="#b8b8b8" stroke-width=".6" fill="none"/><path d="M0.6 2.5 L3.1 0.3 H11.9 L9.8 2.5 Z" fill="#8ccaf7"/><path d="M9.8 2.5 L11.9 .3 V10 L9.8 12.5 Z" fill="#3a7fc0"/><rect x=".6" y="2.5" width="9.2" height="10" fill="#5a9fe0"/><path d="M14.4 13.3 V3.4" stroke="#222" stroke-width="1"/><path d="M14.4 0.8 L15.9 4 H12.9 Z" fill="#222"/></g><g opacity=".3" transform="translate(244,1005)"><path d="M4 3 H11 M2.5 5 V11.5 M4 13.6 H11" stroke="#333" stroke-width="1" stroke-dasharray="3 1.5" fill="none"/><rect x=".6" y="1" width="3.6" height="3.6" fill="#fff" stroke="#333" stroke-width=".9"/><g fill="#5aa2e0"><rect x="11" y=".8" width="4" height="4"/><rect x=".4" y="11.4" width="4" height="4"/><rect x="11" y="11.4" width="4" height="4"/></g></g><g opacity=".32" transform="translate(267,1005)"><path d="M.6 4 L4 .6 H15.6 V12 L12 15.6 H.6 Z" fill="#eee" stroke="#555" stroke-width="1"/><path d="M12 4 L15.4 .8 V12 L12 15.4 Z" fill="#ccc"/><rect x="2.4" y="5.4" width="8" height="8.2" fill="#fff"/><path d="M2.6 5.6 H6 V10 H10 V13.4 H2.6 Z" fill="#5aa2e0"/></g><g transform="translate(291,1005)" opacity="0.28"><path d="M3.4 1.6 H12 M1.2 3.8 V12.4 M14.2 3.8 V8.2 M3.4 14.8 H8.4" stroke="#444" stroke-width=".9" fill="none"/><g fill="#1a8ce6"><rect x="0.2" y=".6" width="2" height="2"/><rect x="13.2" y=".6" width="2" height="2"/><rect x="0.2" y="13.8" width="2" height="2"/></g><path d="M9.4 15.9 L10.2 13.4 L14 9.4 L15.9 11.2 L12 15.2 Z" fill="#f5b942"/><path d="M14 9.4 L14.8 8.6 Q15.8 8 16.5 8.8 Q17.1 9.8 16.4 10.6 L15.9 11.2 Z" fill="#f03030"/><path d="M9.4 15.9 L10.2 13.4 L12 15.2 Z" fill="#444"/></g><g transform="translate(315,1005)" opacity="0.28"><path d="M0.6 12.5 H9.8 L11.9 10 V13.6 L9.8 15.8 H0.6 Z" fill="#dcdcdc"/><path d="M0.6 15.8 H9.8 L11.9 13.6" stroke="#b8b8b8" stroke-width=".6" fill="none"/><path d="M0.6 2.5 L3.1 0.3 H11.9 L9.8 2.5 Z" fill="#8ccaf7"/><path d="M9.8 2.5 L11.9 .3 V10 L9.8 12.5 Z" fill="#3a7fc0"/><rect x=".6" y="2.5" width="9.2" height="10" fill="#5a9fe0"/><path d="M14.4 13.3 V3.4" stroke="#222" stroke-width="1"/><path d="M14.4 0.8 L15.9 4 H12.9 Z" fill="#222"/></g><path d="M184.9 999.2 H197.1 V1000.6 L191.9 1004.6 V1030.8 H189.9 V1004.6 L184.9 1000.6 Z" fill="#555"/><polygon points="1187.94,1012.41 1187.94,1015.59 1185.55,1015.68 1185.14,1016.66 1186.77,1018.42 1184.52,1020.67 1182.76,1019.04 1181.78,1019.45 1181.69,1021.84 1178.51,1021.84 1178.42,1019.45 1177.44,1019.04 1175.68,1020.67 1173.43,1018.42 1175.06,1016.66 1174.65,1015.68 1172.26,1015.59 1172.26,1012.41 1174.65,1012.32 1175.06,1011.34 1173.43,1009.58 1175.68,1007.33 1177.44,1008.96 1178.42,1008.55 1178.51,1006.16 1181.69,1006.16 1181.78,1008.55 1182.76,1008.96 1184.52,1007.33 1186.77,1009.58 1185.14,1011.34 1185.55,1012.32" fill="#999"/><circle cx="1180.1" cy="1014" r="2.7" fill="#f2f2f2"/></svg></div>
<div id="frame"></div>
<div class="abs" style="left:273px;top:0;width:49px;height:1px;background:#0066cc;z-index:101"></div>
<div class="abs" style="left:322px;top:0;width:192px;height:1px;background:#e4e4e4;z-index:101"></div>
</body></html>
